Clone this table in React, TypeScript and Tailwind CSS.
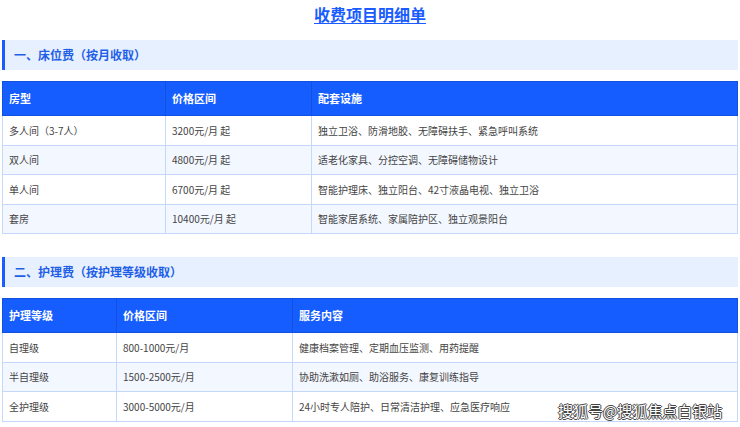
const font = { fontFamily: '"Noto Sans CJK SC", "Noto Sans", sans-serif' };

type Table = {
  title: string;
  widths: string[];
  head: string[];
  rows: string[][];
};

const tables: Table[] = [
  {
    title: '一、床位费（按月收取）',
    widths: ['w-[163px]', 'w-[146px]', 'w-auto'],
    head: ['房型', '价格区间', '配套设施'],
    rows: [
      ['多人间（3-7人）', '3200元/月 起', '独立卫浴、防滑地胶、无障碍扶手、紧急呼叫系统'],
      ['双人间', '4800元/月 起', '适老化家具、分控空调、无障碍储物设计'],
      ['单人间', '6700元/月 起', '智能护理床、独立阳台、42寸液晶电视、独立卫浴'],
      ['套房', '10400元/月 起', '智能家居系统、家属陪护区、独立观景阳台'],
    ],
  },
  {
    title: '二、护理费（按护理等级收取）',
    widths: ['w-[114px]', 'w-[176px]', 'w-auto'],
    head: ['护理等级', '价格区间', '服务内容'],
    rows: [
      ['自理级', '800-1000元/月', '健康档案管理、定期血压监测、用药提醒'],
      ['半自理级', '1500-2500元/月', '协助洗漱如厕、助浴服务、康复训练指导'],
      ['全护理级', '3000-5000元/月', '24小时专人陪护、日常清洁护理、应急医疗响应'],
    ],
  },
];

function Section({ t, first }: { t: Table; first: boolean }) {
  return (
    <div className={first ? '' : 'mt-[23px]'}>
      <div className="h-[30px] flex items-center border-l-[3px] border-[#1a5cff] bg-[#e7f0fe] pl-[9px]">
        <span className="text-[12px] font-bold text-[#1f5fe8]">{t.title}</span>
      </div>
      <table className="mt-[11px] w-full table-fixed border-collapse text-left">
        <colgroup>
          {t.widths.map((w, i) => (
            <col key={i} className={w} />
          ))}
        </colgroup>
        <thead>
          <tr className="h-[34px] bg-[#165dff]">
            {t.head.map((h, i) => (
              <th
                key={i}
                className="border border-[#1250e0] px-[6px] text-[11px] font-bold text-white"
              >
                {h}
              </th>
            ))}
          </tr>
        </thead>
        <tbody>
          {t.rows.map((r, ri) => (
            <tr key={ri} className={`h-[29.5px] ${ri % 2 ? 'bg-[#f3f7ff]' : 'bg-white'}`}>
              {r.map((c, ci) => (
                <td
                  key={ci}
                  className="border border-[#c4d8fb] px-[6px] text-[10px] text-[#444]"
                >
                  {c}
                </td>
              ))}
            </tr>
          ))}
        </tbody>
      </table>
    </div>
  );
}

export default function App() {
  return (
    <div className="relative w-[740px] h-[427px] overflow-hidden bg-white px-[2px]" style={font}>
      <div className="pt-[3px] text-center leading-[22px]">
        <span className="text-[16px] font-bold text-[#1a5cff] underline underline-offset-2">
          收费项目明细单
        </span>
      </div>
      <div className="mt-[15px]">
        {tables.map((t, i) => (
          <Section key={i} t={t} first={i === 0} />
        ))}
      </div>
      <div className="absolute left-[558px] top-[400px] text-[15px] leading-[21px] text-white [text-shadow:1px_0_#444,-1px_0_#444,0_1px_#444,0_-1px_#444]">
        搜狐号@搜狐焦点白银站
      </div>
    </div>
  );
}
